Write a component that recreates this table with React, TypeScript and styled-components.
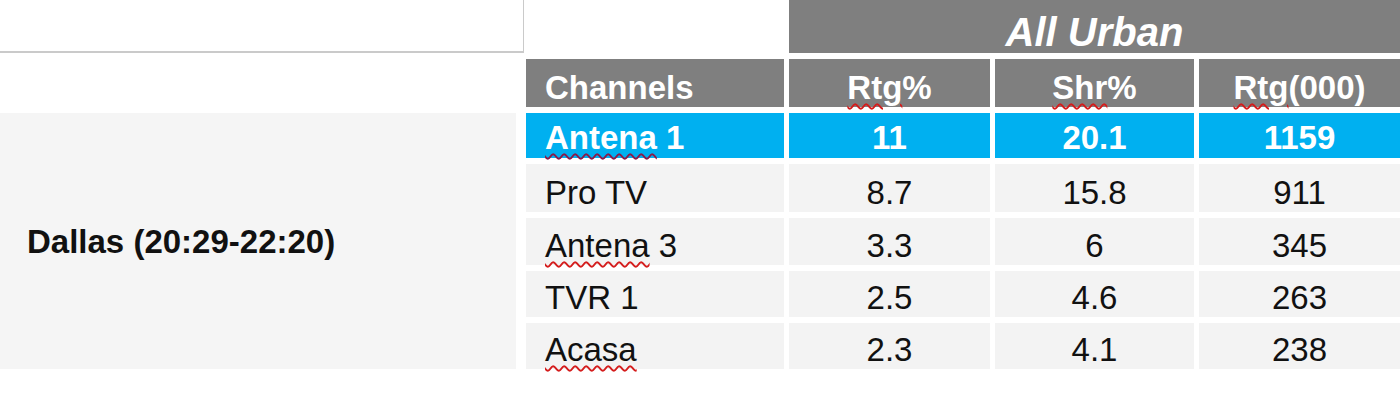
import React from 'react';
import styled, { createGlobalStyle, css } from 'styled-components';

const GlobalStyle = createGlobalStyle`
  html, body {
    margin: 0;
    padding: 0;
    background: #ffffff;
  }
  body {
    font-family: "Liberation Sans", Arial, sans-serif;
  }
`;

type Row = {
  channel: string;
  flagged?: boolean;
  rtg: string;
  shr: string;
  rtg000: string;
  highlight?: boolean;
};

const rows: Row[] = [
  { channel: 'Antena', flagged: true, rtg: '11', shr: '20.1', rtg000: '1159', highlight: true },
  { channel: 'Pro TV', rtg: '8.7', shr: '15.8', rtg000: '911' },
  { channel: 'Antena', flagged: true, rtg: '3.3', shr: '6', rtg000: '345' },
  { channel: 'TVR 1', rtg: '2.5', shr: '4.6', rtg000: '263' },
  { channel: 'Acasa', flagged: true, rtg: '2.3', shr: '4.1', rtg000: '238' },
];

const suffix = [' 1', '', ' 3', '', ''];

const App = () => {
  return (
    <>
      <GlobalStyle />
      <Sheet>
        <Corner />
        <Blank />
        <GroupHeader>All Urban</GroupHeader>

        <HeadCell $align="left">Channels</HeadCell>
        <HeadCell><Squiggle>Rtg</Squiggle>%</HeadCell>
        <HeadCell><Squiggle>Shr</Squiggle>%</HeadCell>
        <HeadCell><Squiggle>Rtg</Squiggle>(000)</HeadCell>

        <Region>Dallas (20:29-22:20)</Region>

        {rows.map((r, i) => (
          <React.Fragment key={i}>
            <Cell $align="left" $highlight={r.highlight}>
              {r.flagged ? <Squiggle $dark={r.highlight}>{r.channel}</Squiggle> : r.channel}
              {suffix[i]}
            </Cell>
            <Cell $highlight={r.highlight}>{r.rtg}</Cell>
            <Cell $highlight={r.highlight}>{r.shr}</Cell>
            <Cell $highlight={r.highlight}>{r.rtg000}</Cell>
          </React.Fragment>
        ))}
      </Sheet>
    </>
  );
};

export default App;

const Sheet = styled.div`
  width: 1400px;
  height: 403px;
  display: grid;
  grid-template-columns: 521px 258px 201px 199px 201px;
  grid-template-rows: 53px 48px 45px 48px 47px 46px 46px;
  column-gap: 5px;
  row-gap: 6px;
  align-content: start;
  font-size: 33px;
  color: #111111;
`;

const Corner = styled.div`
  grid-column: 1;
  grid-row: 1;
  margin-right: -3px;
  border-bottom: 2px solid #cacaca;
  border-right: 1px solid #cacaca;
`;

const Blank = styled.div`
  grid-column: 2;
  grid-row: 1;
`;

const GroupHeader = styled.div`
  grid-column: 3 / span 3;
  grid-row: 1;
  background: #7f7f7f;
  color: #ffffff;
  font-size: 40px;
  font-weight: bold;
  font-style: italic;
  line-height: 1;
  display: flex;
  align-items: flex-end;
  justify-content: center;
  padding-bottom: 1px;
`;

const cellText = css<{ $align?: 'left' | 'center' }>`
  display: flex;
  align-items: flex-end;
  justify-content: ${p => (p.$align === 'left' ? 'flex-start' : 'center')};
  padding: 0 0 3px ${p => (p.$align === 'left' ? '19px' : '0')};
  line-height: 1;
  white-space: pre;
  ${p => p.$align === 'left' && 'grid-column: 2;'}
`;

const HeadCell = styled.div<{ $align?: 'left' | 'center' }>`
  ${cellText};
  background: #7f7f7f;
  color: #ffffff;
  font-weight: bold;
`;

const Region = styled.div`
  grid-column: 1;
  grid-row: 3 / span 5;
  margin-right: 5px;
  background: #f5f5f5;
  display: flex;
  align-items: center;
  padding-left: 27px;
  font-weight: bold;
  line-height: 1;
`;

const Cell = styled.div<{ $align?: 'left' | 'center'; $highlight?: boolean }>`
  ${cellText};
  background: ${p => (p.$highlight ? '#00b0f0' : '#f3f3f3')};
  color: ${p => (p.$highlight ? '#ffffff' : '#111111')};
  font-weight: ${p => (p.$highlight ? 'bold' : 'normal')};
  padding-bottom: ${p => (p.$highlight ? '4px' : '3px')};
`;

const Squiggle = styled.span<{ $dark?: boolean }>`
  text-decoration-line: underline;
  text-decoration-style: wavy;
  text-decoration-color: ${p => (p.$dark ? '#8a1a4a' : '#d41c1c')};
  text-decoration-thickness: 2px;
  text-underline-offset: 4px;
`;
